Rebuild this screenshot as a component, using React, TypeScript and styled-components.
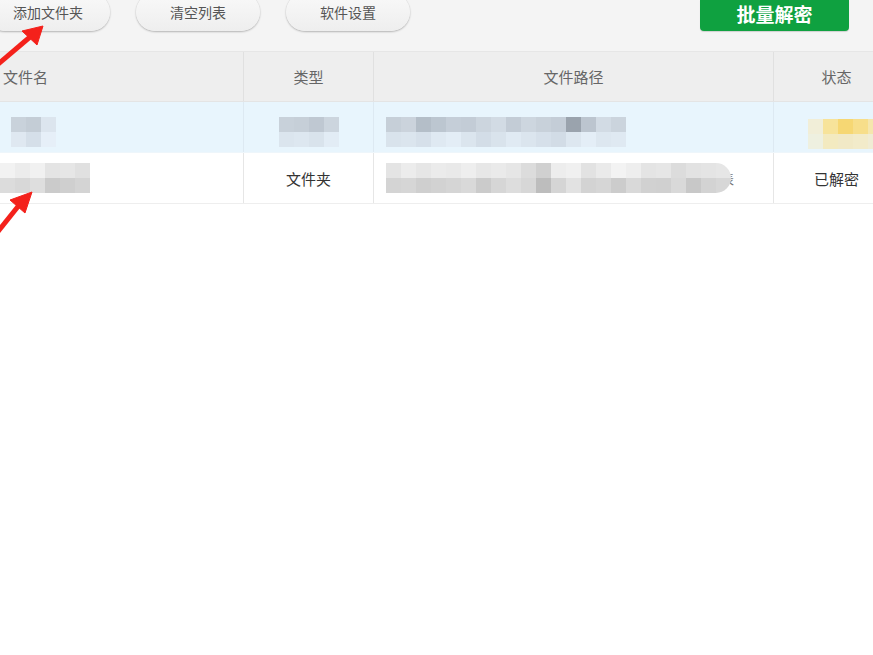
import styled, { createGlobalStyle } from "styled-components";

const GlobalStyle = createGlobalStyle`
  html, body {
    margin: 0;
    padding: 0;
    background: #ffffff;
  }
  body {
    font-family: "Noto Sans CJK SC", "Noto Sans", sans-serif;
    overflow: hidden;
  }
`;

const Page = styled.div`
  position: relative;
  width: 873px;
  height: 655px;
  overflow: hidden;
  background: #fff;
`;

const Toolbar = styled.div`
  height: 51px;
  background: #f4f4f4;
  display: flex;
  align-items: flex-start;
  overflow: hidden;
`;

const ButtonGroup = styled.div`
  display: flex;
  gap: 26px;
  margin-left: -14px;
`;

const PillButton = styled.button`
  width: 124px;
  height: 38px;
  margin-top: -7px;
  padding: 0;
  border: none;
  border-radius: 20px;
  background: linear-gradient(#f9f9f9, #eeeeee);
  box-shadow: 0 1px 2px rgba(0, 0, 0, 0.25), 0 0 1px rgba(0, 0, 0, 0.15);
  font-family: inherit;
  font-size: 14px;
  color: #555;
`;

const PrimaryButton = styled.button`
  margin-left: auto;
  margin-right: 24px;
  width: 149px;
  height: 31px;
  padding: 0 0 4px;
  border: none;
  border-radius: 0 0 4px 4px;
  background: #0fa140;
  box-shadow: 0 1px 1px rgba(0, 0, 0, 0.15);
  font-family: inherit;
  font-weight: bold;
  font-size: 19px;
  line-height: 22px;
  color: #fff;
`;

const Table = styled.div`
  width: 900px;
`;

const Row = styled.div<{ $bg: string; $line: string }>`
  display: grid;
  grid-template-columns: 244px 130px 400px 126px;
  height: 51px;
  background: ${(p) => p.$bg};
  border-bottom: 1px solid ${(p) => p.$line};
  box-sizing: border-box;
`;

const HeaderRow = styled(Row)`
  border-top: 1px solid #e6e6e6;
`;

const Cell = styled.div<{ $align?: "left" | "center"; $line: string }>`
  display: flex;
  align-items: center;
  justify-content: ${(p) => (p.$align === "left" ? "flex-start" : "center")};
  padding-left: ${(p) => (p.$align === "left" ? "3px" : "0")};
  border-right: 1px solid ${(p) => p.$line};
  font-size: 15px;
  color: #333;
  overflow: hidden;
  position: relative;
`;

const HeadCell = styled(Cell)`
  color: #666;
`;

const MosaicGrid = styled.div<{ $cols: number; $offset: number; $shift: number; $round?: boolean }>`
  display: grid;
  grid-template-columns: repeat(${(p) => p.$cols}, 15px);
  grid-auto-rows: 15px;
  margin-left: ${(p) => p.$offset}px;
  margin-top: ${(p) => p.$shift}px;
  border-radius: ${(p) => (p.$round ? "0 16px 16px 0" : "0")};
  overflow: hidden;
  position: relative;
  z-index: 1;
`;

const Block = styled.span<{ $c: string }>`
  background: ${(p) => p.$c};
`;

const TailGlyph = styled.span`
  font-size: 13px;
  color: #777;
  margin-left: -10px;
`;

const Overlay = styled.svg`
  position: absolute;
  left: 0;
  top: 0;
  pointer-events: none;
  z-index: 5;
`;

type MosaicProps = {
  top: string[];
  bottom: string[];
  offset?: number;
  shift?: number;
  round?: boolean;
};

const Mosaic = ({ top, bottom, offset = 0, shift = 0, round }: MosaicProps) => (
  <MosaicGrid $cols={top.length} $offset={offset} $shift={shift} $round={round}>
    {top.map((c, i) => (
      <Block key={"t" + i} $c={c} />
    ))}
    {bottom.map((c, i) => (
      <Block key={"b" + i} $c={c} />
    ))}
  </MosaicGrid>
);

const row1Path = {
  top: ["#c6cfd8", "#cbd3dc", "#b4bec8", "#bcc6d0", "#c5ced8", "#c3ccd6", "#ccd5de", "#d2dbe4", "#c3ccd6", "#cdd6df", "#c8d1da", "#c4cdd7", "#9aa3ad", "#bcc5cf", "#d2dbe4", "#cbd4dd"],
  bottom: ["#d9e3ec", "#dbe5ee", "#d6e0ea", "#dfe9f2", "#e3edf6", "#dbe5ee", "#d3dde7", "#d9e3ec", "#e0eaf3", "#dbe5ee", "#d6e0ea", "#d2dce6", "#dde7f0", "#e4eef7", "#dde7f0", "#dfe9f2"],
};

const row2Path = {
  top: ["#e4e4e4", "#ececec", "#e6e6e6", "#ebebeb", "#e9e9e9", "#eeeeee", "#e7e7e7", "#eaeaea", "#e6e6e6", "#dcdcdc", "#d0d0d0", "#ededed", "#f0f0f0", "#e2e2e2", "#eaeaea", "#f3f3f3", "#eeeeee", "#e4e4e4", "#e6e6e6", "#dcdcdc", "#e2e2e2", "#e4e4e4", "#e6e6e6"],
  bottom: ["#d4d4d4", "#d6d6d6", "#cfcfcf", "#d2d2d2", "#d5d5d5", "#d9d9d9", "#cbcbcb", "#d6d6d6", "#dddddd", "#d7d7d7", "#bdbdbd", "#d5d5d5", "#e2e2e2", "#d3d3d3", "#d6d6d6", "#cccccc", "#d9d9d9", "#d1d1d1", "#d0d0d0", "#d9d9d9", "#c8c8c8", "#d3d3d3", "#d7d7d7"],
};

export default function App() {
  return (
    <Page>
      <GlobalStyle />
      <Toolbar>
        <ButtonGroup>
          <PillButton>添加文件夹</PillButton>
          <PillButton>清空列表</PillButton>
          <PillButton>软件设置</PillButton>
        </ButtonGroup>
        <PrimaryButton>批量解密</PrimaryButton>
      </Toolbar>
      <Table>
        <HeaderRow $bg="#eeeeee" $line="#e4e4e4">
          <HeadCell $align="left" $line="#e0e0e0">文件名</HeadCell>
          <HeadCell $line="#e0e0e0">类型</HeadCell>
          <HeadCell $line="#e0e0e0">文件路径</HeadCell>
          <HeadCell $line="#e0e0e0">状态</HeadCell>
        </HeaderRow>
        <Row $bg="#e8f5fd" $line="#eef6fb">
          <Cell $align="left" $line="#dde9f2">
            <Mosaic
              offset={8}
              shift={10}
              top={["#c9d2db", "#c4cdd6", "#dce5ee"]}
              bottom={["#dfe8f1", "#d5dfe9", "#e6eff8"]}
            />
          </Cell>
          <Cell $line="#dde9f2">
            <Mosaic
              shift={10}
              top={["#c8d1da", "#c6cfd8", "#bfc8d2", "#ccd5de"]}
              bottom={["#dbe5ee", "#dde7f0", "#d9e3ec", "#e2ecf5"]}
            />
          </Cell>
          <Cell $align="left" $line="#dde9f2">
            <Mosaic offset={9} shift={10} top={row1Path.top} bottom={row1Path.bottom} />
          </Cell>
          <Cell $align="left" $line="#dde9f2">
            <Mosaic
              offset={31}
              shift={14}
              top={["#f1eed8", "#f7e39a", "#f6d773", "#f7de8a", "#f5e6ad"]}
              bottom={["#eef0e0", "#f3eac0", "#f1e9c6", "#f2ebca", "#f0ecd4"]}
            />
          </Cell>
        </Row>
        <Row $bg="#ffffff" $line="#eeeeee">
          <Cell $align="left" $line="#e6e6e6">
            <Mosaic
              offset={-3}
              top={["#f2f2f2", "#ececec", "#f1f1f1", "#e4e4e4", "#e6e6e6", "#e0e0e0"]}
              bottom={["#dcdcdc", "#d8d8d8", "#dedede", "#cbcbcb", "#cfcfcf", "#d4d4d4"]}
            />
          </Cell>
          <Cell $line="#e6e6e6">文件夹</Cell>
          <Cell $align="left" $line="#e6e6e6">
            <Mosaic offset={9} round top={row2Path.top} bottom={row2Path.bottom} />
            <TailGlyph>表</TailGlyph>
          </Cell>
          <Cell $line="#e6e6e6">已解密</Cell>
        </Row>
      </Table>
      <Overlay width="873" height="655" viewBox="0 0 873 655">
        <g fill="#f4211b" stroke="#f4211b" strokeLinejoin="round">
          <line x1="-4" y1="66" x2="30" y2="37" strokeWidth="5" />
          <polygon points="43,26 22,31 37,45" strokeWidth="1" />
          <line x1="-4" y1="234" x2="20" y2="204" strokeWidth="5" />
          <polygon points="32,192 10,200 25,213" strokeWidth="1" />
        </g>
      </Overlay>
    </Page>
  );
}
